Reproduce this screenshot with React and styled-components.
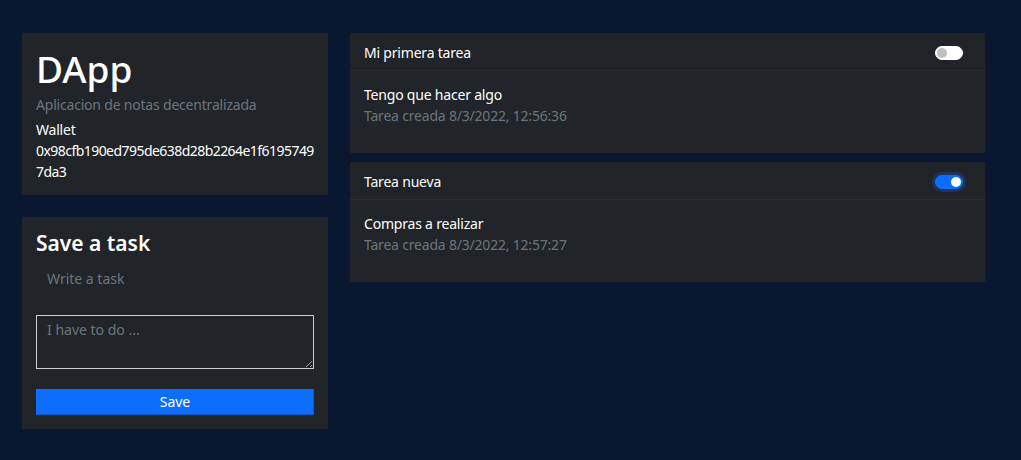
import React from "react";
import styled, { createGlobalStyle } from "styled-components";

const Global = createGlobalStyle`
  html, body { margin: 0; padding: 0; }
  body {
    background: #0a1731;
    font-family: "Segoe UI", "Noto Sans", "Open Sans", sans-serif;
    font-size: 14px;
    line-height: 1.5;
    letter-spacing: -0.2px;
    color: #fff;
    min-height: 460px;
  }
  * { box-sizing: border-box; }
`;

const Page = styled.div`
  display: grid;
  grid-template-columns: 306px 635px;
  column-gap: 22px;
  align-items: start;
  padding: 33px 0 0 22px;
`;

const Column = styled.div`
  display: flex;
  flex-direction: column;
  gap: ${(p) => p.$gap}px;
`;

const Card = styled.div`
  background: #212529;
  display: flex;
  flex-direction: column;
`;

const CardBody = styled.div`
  padding: ${(p) => p.$pad || "14px"};
  display: flex;
  flex-direction: column;
`;

const Title = styled.h1`
  margin: 0;
  font-size: 37px;
  font-weight: 500;
  line-height: 1.2;
  letter-spacing: 0;
  color: #fff;
`;

const Subtitle = styled.div`
  color: #6c757d;
  margin-top: 3px;
  margin-bottom: 4px;
`;

const Line = styled.div`
  color: #fff;
  word-break: break-all;
  letter-spacing: ${(p) => (p.$tight ? "-0.55px" : "-0.2px")};
`;

const FormTitle = styled.h4`
  margin: 0 0 5px;
  font-size: 21px;
  font-weight: 600;
  line-height: 1.2;
  letter-spacing: 0;
`;

const PlainInput = styled.input`
  background: transparent;
  border: none;
  outline: none;
  color: #fff;
  font: inherit;
  padding: 6px 11px;
  margin-bottom: 20px;
  &::placeholder { color: #6c757d; }
`;

const TextArea = styled.textarea`
  background: #212529;
  border: 1px solid #cfcfcf;
  color: #fff;
  font: inherit;
  height: 54px;
  padding: 3px 10px;
  resize: vertical;
  margin-bottom: 20px;
  &::placeholder { color: #6c757d; }
`;

const Button = styled.button`
  background: #0d6efd;
  color: #fff;
  font: inherit;
  border: 1px solid #0d6efd;
  border-right-color: #0a58ca;
  border-bottom-color: #0a58ca;
  height: 26px;
  padding: 0;
  line-height: 1;
`;

const TaskHeader = styled.div`
  display: flex;
  align-items: center;
  justify-content: space-between;
  padding: 9px 22px 7px 14px;
  height: 38px;
  background: #202327;
  border-bottom: 1px solid #2a2e33;
`;

const TaskBody = styled.div`
  padding: 13px 14px 24px;
  min-height: 82px;
`;

const Muted = styled.div`
  color: #6c757d;
`;

const Switch = styled.span`
  position: relative;
  width: 28px;
  height: 14px;
  border-radius: 7px;
  background: ${(p) => (p.$on ? "#0d6efd" : "#fff")};
  box-shadow: ${(p) => (p.$on ? "0 0 0 3px rgba(13,110,253,0.25)" : "none")};
  border: 1px solid ${(p) => (p.$on ? "#0d6efd" : "#fff")};
  &::after {
    content: "";
    position: absolute;
    top: 1px;
    left: ${(p) => (p.$on ? "15px" : "1px")};
    width: 10px;
    height: 10px;
    border-radius: 50%;
    background: ${(p) => (p.$on ? "#fff" : "#bfbfbf")};
  }
`;

const tasks = [
  { title: "Mi primera tarea", desc: "Tengo que hacer algo", date: "Tarea creada 8/3/2022, 12:56:36", done: false },
  { title: "Tarea nueva", desc: "Compras a realizar", date: "Tarea creada 8/3/2022, 12:57:27", done: true },
];

export default function App() {
  return (
    <>
      <Global />
      <Page>
        <Column $gap={22}>
          <Card>
            <CardBody $pad="14px 14px 13px">
              <Title>DApp</Title>
              <Subtitle>Aplicacion de notas decentralizada</Subtitle>
              <Line>Wallet</Line>
              <Line $tight>0x98cfb190ed795de638d28b2264e1f61957497da3</Line>
            </CardBody>
          </Card>
          <Card>
            <CardBody $pad="14px 14px 14px">
              <FormTitle>Save a task</FormTitle>
              <PlainInput placeholder="Write a task" />
              <TextArea placeholder="I have to do ..." />
              <Button>Save</Button>
            </CardBody>
          </Card>
        </Column>
        <Column $gap={9}>
          {tasks.map((t) => (
            <Card key={t.title}>
              <TaskHeader>
                <span>{t.title}</span>
                <Switch $on={t.done} />
              </TaskHeader>
              <TaskBody>
                <div>{t.desc}</div>
                <Muted>{t.date}</Muted>
              </TaskBody>
            </Card>
          ))}
        </Column>
      </Page>
    </>
  );
}
